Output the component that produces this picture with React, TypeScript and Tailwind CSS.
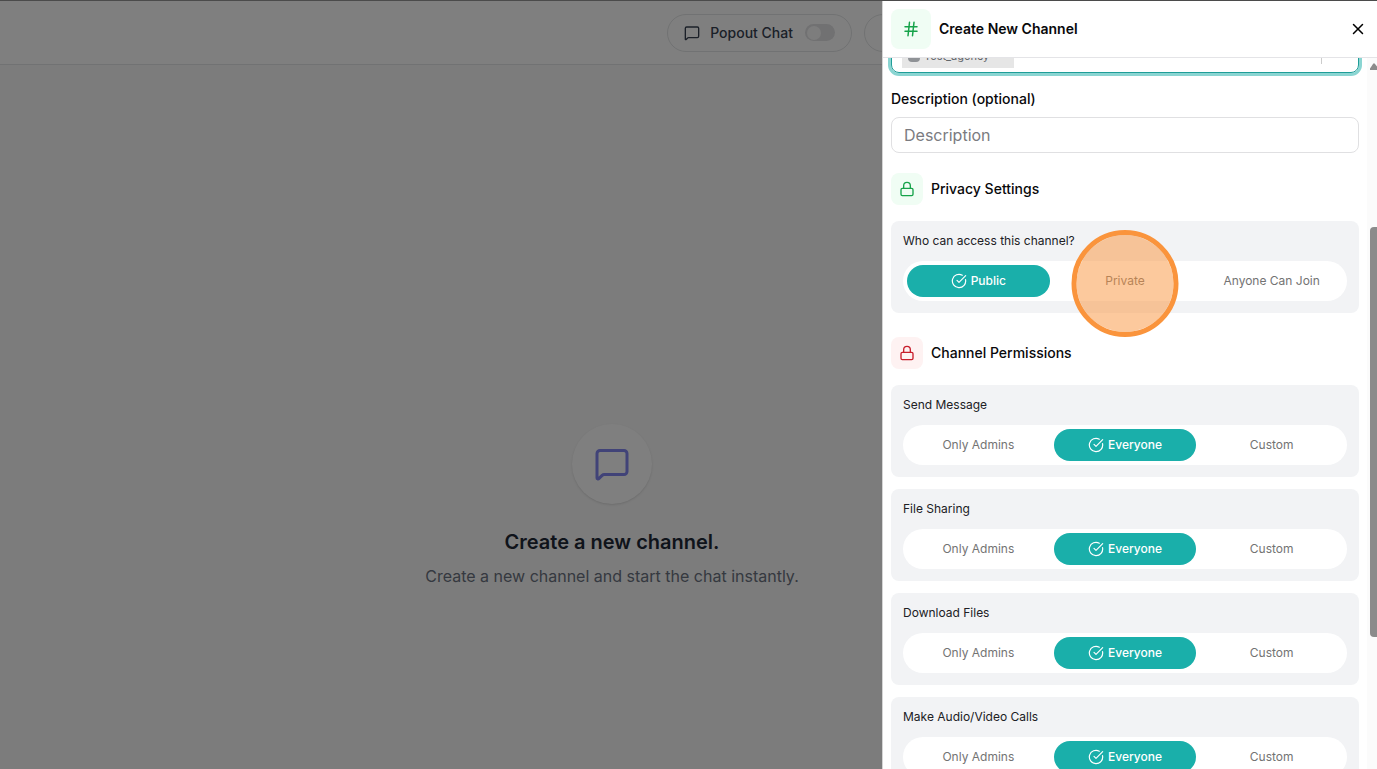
import type { ReactNode } from 'react';
import { CircleCheckBig, Hash, Lock, MessageSquare, X } from 'lucide-react';

interface PermissionCardProps {
  label: string;
  name: string;
  options: string[];
  selected: string;
  highlighted?: string;
}

const permissions = [
  { label: 'Send Message', name: 'send-message' },
  { label: 'File Sharing', name: 'file-sharing' },
  { label: 'Download Files', name: 'download-files' },
  { label: 'Make Audio/Video Calls', name: 'calls' }
];

function PermissionCard({ label, name, options, selected, highlighted }: PermissionCardProps) {
  return (
    <div className="rounded-lg bg-[#f2f3f5] p-3">
      <h4 id={name} className="mb-3 text-xs leading-4 text-[#202024]">
        {label}
      </h4>
      <div
        role="group"
        aria-labelledby={name}
        className="grid grid-cols-3 gap-1 rounded-full bg-white p-1"
      >
        {options.map((option) => {
          const active = option === selected;
          return (
            <button
              key={option}
              type="button"
              aria-pressed={active}
              className={
                active
                  ? 'flex h-8 items-center justify-center gap-1 rounded-full bg-[#1aafaa] text-xs font-medium text-white'
                  : 'relative flex h-8 items-center justify-center rounded-full text-xs text-[#737373]'
              }
            >
              {active && <CircleCheckBig size={16} strokeWidth={1.75} />}
              {option}
              {option === highlighted && (
                <span className="pointer-events-none absolute -top-[35px] left-1/2 z-10 size-[107px] -translate-x-1/2 rounded-full border-[5px] border-[#fa943c] bg-[#fa943c]/50 bg-clip-padding" />
              )}
            </button>
          );
        })}
      </div>
    </div>
  );
}

function SectionHeading({ iconClass, children }: { iconClass: string; children: ReactNode }) {
  return (
    <div className="mb-4 flex items-center gap-2">
      <span className={iconClass}>
        <Lock size={16} />
      </span>
      <h3 className="text-sm font-medium text-[#09090b]">{children}</h3>
    </div>
  );
}

function ChatPage() {
  return (
    <main className="min-h-screen bg-[#f9f9f9]">
      <header className="flex h-[65px] items-center justify-end gap-3 border-b border-[#e2e4e6] bg-white pt-px pr-4">
        <label className="flex h-[38px] items-center gap-2.5 rounded-full border border-[#e2e4e6] px-4 text-sm font-medium text-[#374151]">
          <MessageSquare size={16} />
          Popout Chat
          <input
            type="checkbox"
            role="switch"
            className="ml-0.5 flex h-[17px] w-[30px] appearance-none items-center rounded-full bg-[#e2e2e4] p-0.5 before:size-[14px] before:rounded-full before:bg-[#fafafa]"
          />
        </label>
        <span className="h-[38px] w-[497px] rounded-full border border-[#e2e4e6]" />
      </header>
      <div className="flex flex-col items-center pt-[359px] pr-[153px] text-center">
        <div className="mb-6 flex size-20 items-center justify-center rounded-full bg-white shadow-sm">
          <MessageSquare size={36} className="text-[#8286f0]" />
        </div>
        <h1 className="mb-2 text-xl font-semibold text-[#1f2937]">Create a new channel.</h1>
        <p className="text-base text-[#6b7280]">Create a new channel and start the chat instantly.</p>
      </div>
    </main>
  );
}

export default function App() {
  return (
    <div className="relative h-screen overflow-hidden font-[Inter,sans-serif]">
      <ChatPage />
      <div className="absolute inset-0 flex justify-end border-t border-[#4b4b4b] bg-black/50">
        <aside className="flex w-[495px] max-w-full flex-col overflow-hidden border-l border-[#d4d4d4] bg-white">
          <header className="flex h-[57px] shrink-0 items-center gap-2 border-b border-[#e4e4e7] px-2">
            <span className="flex size-10 items-center justify-center rounded-lg bg-[#f0fdf4] text-[#16a34a]">
              <Hash size={18} />
            </span>
            <h2 className="text-sm font-semibold text-[#09090b]">Create New Channel</h2>
            <button type="button" aria-label="Close" className="ml-auto p-0.5 text-black">
              <X size={18} />
            </button>
          </header>

          <div className="flex min-h-0 flex-1 overflow-hidden">
            <div className="min-w-0 flex-1 px-2">
              {/* members select, scrolled under the header */}
              <div className="-mx-2 flex h-[31px] flex-col justify-end overflow-hidden px-2 pb-4">
                <div className="flex h-10 shrink-0 items-end justify-between rounded-lg border border-[#1f9d98] px-2.5 pb-1 ring-3 ring-[#8ad5d2]">
                  <span className="flex h-6 w-28 items-center gap-1 bg-[#e6e6e6] px-1.5 text-[11px] text-[#5f6368]">
                    <span className="size-3 rounded-sm bg-[#8f9296]" />
                    Test_agency
                  </span>
                  <span className="mr-[26px] mb-1 h-5 w-px bg-[#cccccc]" />
                </div>
              </div>

              <label htmlFor="description" className="mb-2 block text-sm font-medium text-[#09090b]">
                Description (optional)
              </label>
              <input
                id="description"
                placeholder="Description"
                className="mb-5 block h-9 w-full rounded-lg border border-[#e0e0e2] px-3 text-base placeholder:text-[#7b7b80]"
              />

              <SectionHeading iconClass="flex size-8 items-center justify-center rounded-lg bg-[#f0fdf4] text-[#16a34a]">
                Privacy Settings
              </SectionHeading>
              <PermissionCard
                label="Who can access this channel?"
                name="access"
                options={['Public', 'Private', 'Anyone Can Join']}
                selected="Public"
                highlighted="Private"
              />

              <div className="mt-6">
                <SectionHeading iconClass="flex size-8 items-center justify-center rounded-lg bg-[#fef2f2] text-[#c81e2c]">
                  Channel Permissions
                </SectionHeading>
                <div className="flex flex-col gap-3">
                  {permissions.map((permission) => (
                    <PermissionCard
                      key={permission.name}
                      label={permission.label}
                      name={permission.name}
                      options={['Only Admins', 'Everyone', 'Custom']}
                      selected="Everyone"
                    />
                  ))}
                </div>
              </div>
            </div>

            <div className="flex w-2.5 shrink-0 flex-col overflow-hidden bg-[#fbfbfb]">
              <svg viewBox="0 0 10 8" className="mt-1 h-2 w-2.5 shrink-0" fill="#8b8b8b">
                <path d="M3 8V6.500L6 2Q7 .7 8 2L10 4.500V8Z" />
              </svg>
              <div className="mt-[157px] ml-[3px] h-[410px] w-3 shrink-0 rounded bg-[#8b8b8b]" />
            </div>
          </div>
        </aside>
      </div>
    </div>
  );
}
